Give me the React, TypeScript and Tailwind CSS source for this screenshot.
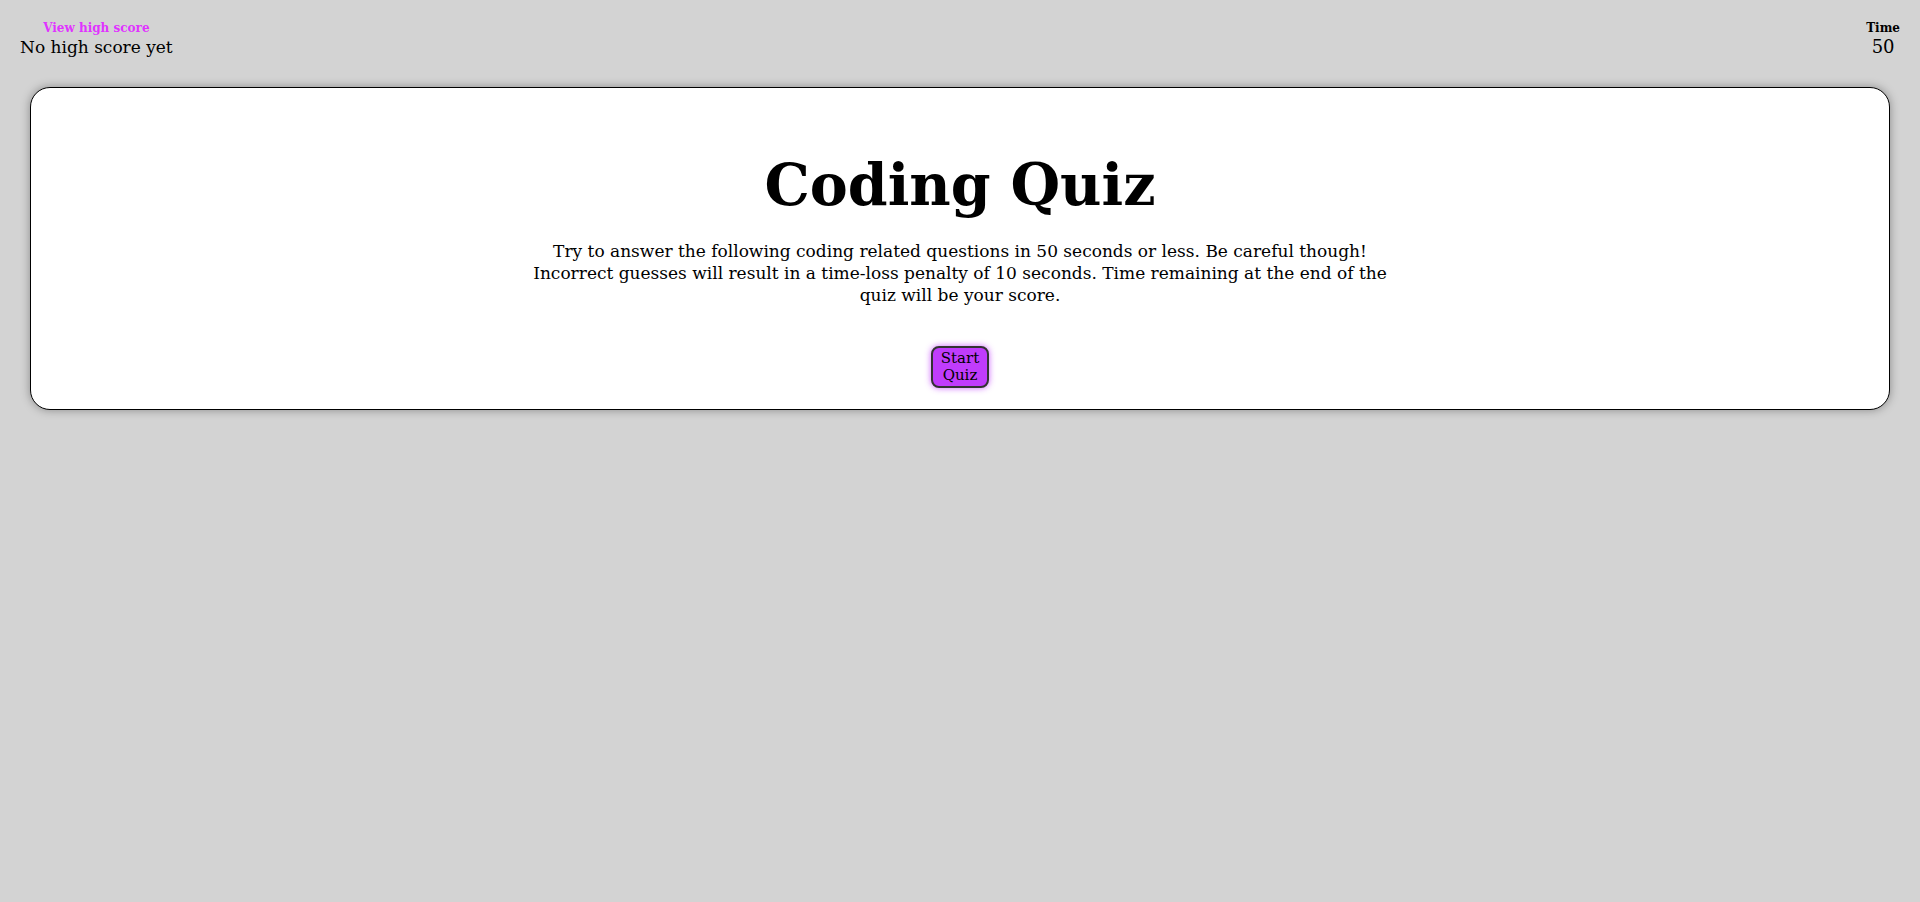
import React from "react";

export default function App() {
  return (
    <div
      className="min-h-[902px] w-full bg-[#d3d3d3] text-black"
      style={{ fontFamily: '"DejaVu Serif", Georgia, serif' }}
    >
      <header className="flex items-start justify-between px-[20px] pt-[20px]">
        <div className="flex flex-col items-center">
          <a className="text-[12px] font-bold leading-[16px] text-[#e033ff]">View high score</a>
          <div className="text-[17px] leading-[22px]">No high score yet</div>
        </div>
        <div className="flex flex-col items-center">
          <div className="text-[12px] font-bold leading-[16px]">Time</div>
          <div className="text-[18px] leading-[22px]">50</div>
        </div>
      </header>
      <main className="mx-[30px] mt-[29px] flex flex-col items-center rounded-[20px] border border-black bg-white pb-[21px] pt-[62px] shadow-[0_0_10px_rgba(0,0,0,0.35)]">
        <h1 className="text-[57px] font-bold leading-[70px]">Coding Quiz</h1>
        <p className="mt-[20px] w-[900px] text-center text-[17px] leading-[22px]">
          Try to answer the following coding related questions in 50 seconds or less. Be careful though!
          <br />
          Incorrect guesses will result in a time-loss penalty of 10 seconds. Time remaining at the end of the
          <br />
          quiz will be your score.
        </p>
        <button className="mt-[40px] h-[42px] w-[58px] rounded-[8px] border-2 border-[#333] bg-[#c03cfc] text-[15px] leading-[17px] text-black shadow-[0_0_6px_rgba(192,60,252,0.8)]">
          Start Quiz
        </button>
      </main>
    </div>
  );
}
